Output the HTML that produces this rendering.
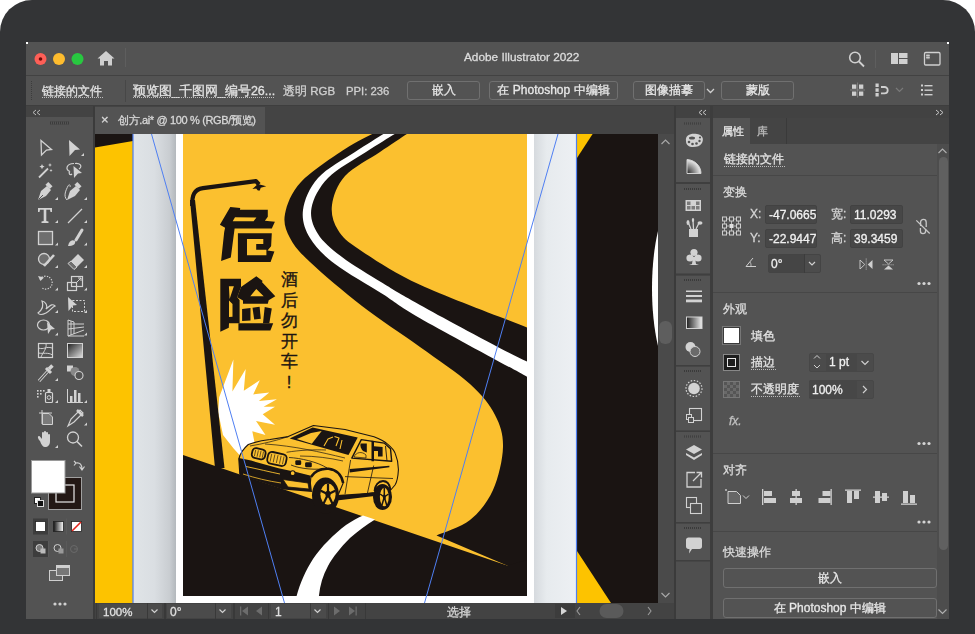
<!DOCTYPE html>
<html><head><meta charset="utf-8">
<style>
*{box-sizing:border-box;margin:0;padding:0}
html,body{width:975px;height:634px;overflow:hidden;background:#fff;font-family:"Liberation Sans",sans-serif;}
.t,.btn{will-change:transform;-webkit-text-stroke-width:0.3px}
.a{position:absolute}
.t{position:absolute;color:#e2e2e2;font-size:12px;white-space:nowrap;line-height:14px}
.btn{position:absolute;border:1px solid #707070;border-radius:3px;color:#e8e8e8;font-size:12px;text-align:center}
.dot{position:absolute;height:1px;background-image:linear-gradient(to right,#bdbdbd 50%,transparent 50%);background-size:2px 1px}
svg{position:absolute;overflow:visible}
</style></head><body>
<div class="a" style="left:0;top:0;width:975px;height:700px;background:#333436;border-radius:32px"></div>
<div class="a" style="left:26px;top:42px;width:923px;height:577px;background:#535353"></div>
<div class="a" style="left:26px;top:42px;width:2px;height:2px;background:#fff"></div>
<div class="a" style="left:947px;top:42px;width:2px;height:2px;background:#fff"></div>
<!-- TITLE BAR -->
<div class="a" style="left:26px;top:75px;width:923px;height:1px;background:#424242"></div>
<svg style="left:0;top:0" width="975" height="634" viewBox="0 0 975 634">
  <circle cx="40.5" cy="59" r="6" fill="#fe5f57"/>
  <circle cx="40.5" cy="59" r="1.8" fill="#6e0a07"/>
  <circle cx="59" cy="59" r="6" fill="#febc2e"/>
  <circle cx="77.5" cy="59" r="6" fill="#28c840"/>
  <path d="M97.5 58.5 L106 51 L114.5 58.5 L112 58.5 L112 65.5 L108 65.5 L108 61 L104 61 L104 65.5 L100 65.5 L100 58.5 Z" fill="#cfcfcf"/>
  <rect x="125" y="48" width="1" height="19" fill="#5e5e5e"/>
  <!-- search -->
  <circle cx="855" cy="57.5" r="5.3" fill="none" stroke="#d0d0d0" stroke-width="1.6"/>
  <path d="M859 61.5 L864 66.5" stroke="#d0d0d0" stroke-width="1.8"/>
  <rect x="875" y="50" width="1" height="18" fill="#5e5e5e"/>
  <!-- workspace -->
  <rect x="891" y="53" width="7" height="11" fill="#d0d0d0"/>
  <rect x="899" y="53" width="8.5" height="5" fill="#d0d0d0"/>
  <rect x="899" y="59" width="8.5" height="5" fill="#d0d0d0"/>
  <rect x="924.5" y="52.5" width="15.5" height="12.5" rx="1.2" fill="none" stroke="#d0d0d0" stroke-width="1.3"/>
  <rect x="926.2" y="54.2" width="3.5" height="5" fill="#9a9a9a"/>
  <rect x="926.2" y="55.2" width="3.5" height="0.8" fill="#d8d8d8"/><rect x="926.2" y="57.2" width="3.5" height="0.8" fill="#d8d8d8"/>
</svg>
<div class="t" style="left:464px;top:50px;font-size:11.8px;color:#dcdcdc">Adobe Illustrator 2022</div>
<!-- CONTROL BAR -->
<div class="a" style="left:26px;top:105px;width:923px;height:1px;background:#3e3e3e"></div>
<div class="dot" style="left:31px;top:81px;width:1px;height:19px;background-image:linear-gradient(to bottom,#3c3c3c 50%,transparent 50%);background-size:1px 2px"></div>
<div class="t" style="left:42px;top:84px;font-size:12px">链接的文件</div>
<div class="dot" style="left:42px;top:97px;width:61px"></div>
<div class="a" style="left:125px;top:80px;width:1px;height:22px;background:#474747"></div>
<div class="t" style="left:133px;top:84px;font-size:12.5px">预览图_千图网_编号26...</div>
<div class="dot" style="left:133px;top:97px;width:142px"></div>
<div class="t" style="left:283px;top:84px;font-size:11.5px;color:#d0d0d0">透明 RGB</div>
<div class="t" style="left:346px;top:84px;font-size:11.3px;color:#d0d0d0">PPI: 236</div>
<div class="btn" style="left:407px;top:81px;width:73px;height:19px;line-height:17px">嵌入</div>
<div class="btn" style="left:489px;top:81px;width:129px;height:19px;line-height:17px">在 Photoshop 中编辑</div>
<div class="btn" style="left:633px;top:81px;width:72px;height:19px;line-height:17px">图像描摹</div>
<svg style="left:0;top:0" width="975" height="634" viewBox="0 0 975 634">
  <path d="M707 89 L710.5 92.5 L714 89" fill="none" stroke="#d0d0d0" stroke-width="1.3"/>
  <!-- align icon -->
  <g fill="#cfcfcf">
    <rect x="852" y="84.5" width="4.3" height="4.3"/><rect x="859" y="84.5" width="4.3" height="4.3"/>
    <rect x="852" y="91.5" width="4.3" height="4.3"/><rect x="859" y="91.5" width="4.3" height="4.3"/>
  </g>
  <path d="M850 90 L865 90 M857.6 82.5 L857.6 97.5" stroke="#8a8a8a" stroke-width="0.8"/>
  <g fill="#cfcfcf">
    <rect x="875.5" y="83.5" width="3.2" height="3.5"/><rect x="875.5" y="88.3" width="3.2" height="3.5"/><rect x="875.5" y="93" width="3.2" height="3.5"/>
    <path d="M881 87 L884.5 87 A3.2 3.2 0 0 1 884.5 93.4 L881 93.4" fill="none" stroke="#cfcfcf" stroke-width="1.8"/>
  </g>
  <path d="M896 88 L899.5 91.5 L903 88" fill="none" stroke="#7a7a7a" stroke-width="1.2"/>
  <g fill="#cfcfcf">
    <rect x="921" y="84.5" width="2" height="2"/><rect x="921" y="89" width="2" height="2"/><rect x="921" y="93.5" width="2" height="2"/>
    <rect x="924.5" y="85" width="8" height="1.4"/><rect x="924.5" y="89.5" width="8" height="1.4"/><rect x="924.5" y="94" width="8" height="1.4"/>
  </g>
</svg>
<div class="btn" style="left:721px;top:81px;width:73px;height:19px;line-height:17px">蒙版</div>
<!-- LEFT TOOLBAR -->
<div class="a" style="left:26px;top:106px;width:67px;height:11px;background:#434343"></div>
<div class="a" style="left:93px;top:106px;width:2px;height:513px;background:#3b3b3b"></div>
<svg style="left:0;top:0" width="975" height="634" viewBox="0 0 975 634">
  <path d="M36 110 L33 112.5 L36 115 M40 110 L37 112.5 L40 115" fill="none" stroke="#bdbdbd" stroke-width="1"/>
  <g fill="#3c3c3c"><rect x="50" y="121.5" width="19" height="3"/></g>
  <g fill="#535353"><rect x="51" y="121.5" width="1" height="3"/><rect x="53" y="121.5" width="1" height="3"/><rect x="55" y="121.5" width="1" height="3"/><rect x="57" y="121.5" width="1" height="3"/><rect x="59" y="121.5" width="1" height="3"/><rect x="61" y="121.5" width="1" height="3"/><rect x="63" y="121.5" width="1" height="3"/><rect x="65" y="121.5" width="1" height="3"/><rect x="67" y="121.5" width="1" height="3"/></g>
  <g fill="#d2d2d2" stroke="none">
    <!-- row1 y=148 -->
    <path d="M41 140.5 L51.5 149.5 L46.5 150 L41.5 155 Z" fill="none" stroke="#d2d2d2" stroke-width="1.3"/>
    <path d="M69 140 L80 149.5 L75 150 L69.5 156 Z"/>
    <path d="M81 156 L84 156 L84 153 Z"/>
    <!-- row2 y=170.5 -->
    <path d="M39 177.5 L48 168.5" stroke="#d2d2d2" stroke-width="1.8"/>
    <path d="M42 164 l0.8 1.8 1.8 0.8 -1.8 0.8 -0.8 1.8 -0.8 -1.8 -1.8 -0.8 1.8 -0.8z M50 163 l0.6 1.4 1.4 0.6 -1.4 0.6 -0.6 1.4 -0.6 -1.4 -1.4 -0.6 1.4 -0.6z M51 169 l0.5 1 1 0.5 -1 0.5 -0.5 1 -0.5 -1 -1 -0.5 1 -0.5z"/>
    <path d="M73.5 166 L82 173 L78 173.5 L74 178 Z"/>
    <path d="M74 163.5 C 66 163.5 65 170 70 171.5 M70 171.5 C 68 173 70 176 72 174" fill="none" stroke="#d2d2d2" stroke-width="1.2"/>
    <path d="M75 163.5 C 80 163 83 166 79 169" fill="none" stroke="#d2d2d2" stroke-width="1.2"/>
    <!-- row3 y=193 -->
    <path d="M38 200 L41 191 L47 186 L51 190 L46 196 Z"/>
    <rect x="46" y="183.5" width="6" height="4" transform="rotate(45 49 185.5)"/>
    <path d="M38.5 199.5 L43 195" stroke="#535353" stroke-width="1"/>
    <path d="M55 200 L58 200 L58 197 Z"/>
    <path d="M67 200 L70 191 L76 186 L80 190 L75 196 Z"/>
    <rect x="75" y="183.5" width="6" height="4" transform="rotate(45 78 185.5)"/>
    <path d="M67 200 C 63 196 66 190 68 186 C 69 184 71 185 70 187" fill="none" stroke="#d2d2d2" stroke-width="1"/>
    <path d="M84 200 L87 200 L87 197 Z"/>
    <!-- row4 y=215.5 -->
    <path d="M38 208 L52 208 L52 212 L50.5 212 L50 209.8 L46.3 209.8 L46.3 221 L48.5 221.5 L48.5 223 L41.5 223 L41.5 221.5 L43.7 221 L43.7 209.8 L40 209.8 L39.5 212 L38 212 Z"/>
    <path d="M55 223 L58 223 L58 220 Z"/>
    <path d="M68 223 L82 209" stroke="#d2d2d2" stroke-width="1.3"/>
    <path d="M84 223 L87 223 L87 220 Z"/>
    <!-- row5 y=238 -->
    <rect x="38.5" y="231.5" width="14" height="13" fill="#6e6e6e" stroke="#d2d2d2" stroke-width="1.3"/>
    <path d="M55 245.5 L58 245.5 L58 242.5 Z"/>
    <path d="M82 230 L76 240" stroke="#d2d2d2" stroke-width="3" stroke-linecap="round"/>
    <path d="M68 246 C 69 241 72 239 75 241 C 76 244 73 246 68 246 Z"/>
    <path d="M84 245.5 L87 245.5 L87 242.5 Z"/>
    <!-- row6 y=260.5 -->
    <circle cx="44" cy="259" r="5.5" fill="#6e6e6e" stroke="#d2d2d2" stroke-width="1.3"/>
    <path d="M44 266 L54 255" stroke="#d2d2d2" stroke-width="2.6"/>
    <path d="M55 268 L58 268 L58 265 Z"/>
    <path d="M71 261 L78 254 L84 260 L77 267 Z" fill="#d2d2d2"/>
    <path d="M68 263.5 L71 261 L77 267 L74 269.5 Z" fill="#6e6e6e" stroke="#d2d2d2" stroke-width="1"/>
    <path d="M84 268 L87 268 L87 265 Z"/>
    <!-- row7 y=283 -->
    <path d="M40 279.5 A 6.5 6.5 0 1 1 42 288" fill="none" stroke="#d2d2d2" stroke-width="1.2" stroke-dasharray="1.3 1.3"/>
    <path d="M38 276 L40.5 281 L44 277.5 Z"/>
    <path d="M55 290.5 L58 290.5 L58 287.5 Z"/>
    <rect x="67.5" y="282.5" width="9" height="8" fill="none" stroke="#d2d2d2" stroke-width="1.2"/>
    <rect x="71.5" y="276.5" width="11" height="10" fill="none" stroke="#d2d2d2" stroke-width="1.2"/>
    <path d="M76 283 L81 278 M78 278 L81 278 L81 281" fill="none" stroke="#d2d2d2" stroke-width="1"/>
    <path d="M84 290.5 L87 290.5 L87 287.5 Z"/>
    <!-- row8 y=305.5 -->
    <path d="M38 313 C 42 310 44 306 42 301 C 46 302 48 306 46 309 C 50 306 52 303 55 306 C 52 307 50 311 46 313 C 44 314 40 316 38 313 Z" fill="none" stroke="#d2d2d2" stroke-width="1.2"/>
    <path d="M55 313 L58 313 L58 310 Z"/>
    <path d="M68 297 L77 305 L73 305.5 L68.5 311 Z"/>
    <rect x="72.5" y="300.5" width="12" height="11" fill="none" stroke="#d2d2d2" stroke-width="1" stroke-dasharray="2 1.5"/>
    <path d="M84 313 L87 313 L87 310 Z"/>
    <!-- row9 y=328 -->
    <ellipse cx="43.5" cy="325" rx="6" ry="5" fill="none" stroke="#d2d2d2" stroke-width="1.2"/>
    <path d="M47 322 L55 329 L51 329.5 L48 334 Z"/>
    <path d="M55 335.5 L58 335.5 L58 332.5 Z"/>
    <path d="M68 320 L68 336 L84 336 M68 320 L74 322 L74 334 M68 336 L84 330 M68 329 L84 327 M68 324 L84 324 M71 321 L71 335" fill="none" stroke="#d2d2d2" stroke-width="1"/>
    <path d="M84 335.5 L87 335.5 L87 332.5 Z"/>
    <!-- row10 y=350.5 -->
    <rect x="38.5" y="343.5" width="14" height="14" fill="none" stroke="#d2d2d2" stroke-width="1.2"/>
    <path d="M38.5 348 C 44 350 46 346 52 348 M41 357 C 43 352 47 349 46 343.5 M38.5 353 C 43 354 48 352 52.5 355" fill="none" stroke="#d2d2d2" stroke-width="1"/>
    <defs><linearGradient id="tg" x1="0" x2="1" y1="0" y2="1"><stop offset="0" stop-color="#202020"/><stop offset="1" stop-color="#e0e0e0"/></linearGradient></defs>
    <rect x="67.5" y="343.5" width="15" height="14" fill="url(#tg)" stroke="#d2d2d2" stroke-width="1"/>
    <!-- row11 y=373 -->
    <path d="M39 381 L48 371" stroke="#d2d2d2" stroke-width="3.2"/>
    <path d="M39 381 L48 371" stroke="#535353" stroke-width="1.2"/>
    <path d="M46 368 L51 373" stroke="#d2d2d2" stroke-width="3"/>
    <rect x="49" y="364.5" width="3.5" height="5" transform="rotate(45 50.5 367)"/>
    <path d="M55 381 L58 381 L58 378 Z"/>
    <rect x="67" y="365.5" width="6" height="6"/>
    <circle cx="75" cy="371.5" r="4.5" fill="#888"/>
    <circle cx="79" cy="375.5" r="4" fill="#535353" stroke="#d2d2d2" stroke-width="1.1"/>
    <!-- row12 y=395.5 -->
    <g><rect x="37" y="390" width="1.6" height="1.6"/><rect x="40" y="390" width="1.6" height="1.6"/><rect x="43" y="390" width="1.6" height="1.6"/><rect x="37" y="393" width="1.6" height="1.6"/><rect x="40" y="393" width="1.6" height="1.6"/><rect x="37" y="396" width="1.6" height="1.6"/></g>
    <rect x="45.5" y="392.5" width="7" height="10" rx="1" fill="none" stroke="#d2d2d2" stroke-width="1.2"/>
    <circle cx="49" cy="397.5" r="1.8" fill="none" stroke="#d2d2d2" stroke-width="1"/>
    <rect x="47.5" y="389" width="3" height="3"/>
    <path d="M55 403 L58 403 L58 400 Z"/>
    <path d="M67.5 389 L67.5 402.5 L83 402.5" fill="none" stroke="#d2d2d2" stroke-width="1"/>
    <rect x="70" y="396" width="2.5" height="6"/><rect x="74" y="390" width="2.5" height="12"/><rect x="78" y="393" width="2.5" height="9"/>
    <path d="M84 403 L87 403 L87 400 Z"/>
    <!-- row13 y=418 -->
    <path d="M39 413 L52 413 M42 410 L42 424" stroke="#d2d2d2" stroke-width="1"/>
    <path d="M42.5 413.5 L49 413.5 L52.5 417 L52.5 424.5 L42.5 424.5 Z" fill="#7a7a7a" stroke="#d2d2d2" stroke-width="1"/>
    <path d="M68 426 L71 419 L80 410 L83 413 L74 422 Z" fill="none" stroke="#d2d2d2" stroke-width="1.2"/>
    <path d="M77 410 L83 416" stroke="#d2d2d2" stroke-width="2.5"/>
    <path d="M84 425.5 L87 425.5 L87 422.5 Z"/>
    <!-- row14 y=440.5 -->
    <path d="M40 441 C 38 439 37 436 39 436 C 40 436 41 438 42 439 L42 433 C 42 431.5 44 431.5 44 433 L44 438 L44 432 C 44 430.5 46 430.5 46 432 L46 438 L46 433 C 46 431.5 48 431.5 48 433 L48 439 L48 435 C 48 433.5 50 433.5 50 435 L50 441 C 50 445 48 447 45 447 C 43 447 41.5 445 40 441 Z"/>
    <path d="M55 448 L58 448 L58 445 Z"/>
    <circle cx="73" cy="437.5" r="5.5" fill="none" stroke="#d2d2d2" stroke-width="1.3"/>
    <path d="M77 441.5 L82 446.5" stroke="#d2d2d2" stroke-width="1.6"/>
  </g>
  <!-- fill/stroke -->
  <rect x="48.5" y="477.5" width="33" height="32" fill="#231815" stroke="#a0a0a0" stroke-width="1"/>
  <rect x="56" y="485" width="18" height="17" fill="none" stroke="#e8e8e8" stroke-width="1.2"/>
  <rect x="31.5" y="460.5" width="33.5" height="32.5" fill="#fff" stroke="#9a9a9a" stroke-width="1"/>
  <path d="M76 463 C 80 462 82 465 82 469 M79.5 466.5 L82 470 L84.5 466.5 M74 465.5 L76 463 L74 461" fill="none" stroke="#cfcfcf" stroke-width="1.2"/>
  <rect x="34.5" y="497.5" width="6" height="6" fill="#fff" stroke="#222" stroke-width="1"/>
  <rect x="37.5" y="500.5" width="6" height="6" fill="#111" stroke="#ddd" stroke-width="1"/>
  <!-- color mode buttons -->
  <rect x="33" y="518.5" width="15" height="16" fill="#3d3d3d"/>
  <rect x="35.5" y="521.5" width="10" height="10" fill="#fff" stroke="#222" stroke-width="0.8"/>
  <defs><linearGradient id="tg2" x1="0" x2="1"><stop offset="0" stop-color="#111"/><stop offset="1" stop-color="#fff"/></linearGradient></defs>
  <rect x="53.5" y="521.5" width="10" height="10" fill="url(#tg2)" stroke="#222" stroke-width="0.8"/>
  <rect x="71.5" y="521.5" width="10" height="10" fill="#fff" stroke="#222" stroke-width="0.8"/>
  <path d="M72 531 L81 522" stroke="#e3261c" stroke-width="1.6"/>
  <!-- draw modes -->
  <rect x="33" y="541" width="15" height="16" fill="#3d3d3d"/>
  <g fill="none" stroke="#cfcfcf" stroke-width="1">
    <circle cx="39.5" cy="548" r="3.5" fill="#7a7a7a"/><rect x="40.5" y="548.5" width="5" height="5" fill="#bbb" stroke="none"/>
    <circle cx="57.5" cy="548" r="3.5"/><rect x="58.5" y="548.5" width="5" height="5" fill="#999" stroke="none"/>
    <circle cx="74" cy="549" r="3.5" stroke="#6a6a6a"/><path d="M74 549 L77 549" stroke="#6a6a6a"/>
  </g>
  <g fill="#5a5a5a"><rect x="48" y="518.5" width="1" height="16"/><rect x="66" y="518.5" width="1" height="16"/><rect x="48" y="541" width="1" height="16"/><rect x="66" y="541" width="1" height="16"/></g>
  <!-- screen mode -->
  <rect x="49.5" y="570.5" width="13" height="10" fill="#666" stroke="#cfcfcf" stroke-width="1"/>
  <rect x="56.5" y="565.5" width="13" height="10" fill="#777" stroke="#cfcfcf" stroke-width="1"/>
  <rect x="56.5" y="565.5" width="13" height="2.5" fill="#cfcfcf"/>
  <circle cx="55" cy="604" r="1.6" fill="#d0d0d0"/><circle cx="60" cy="604" r="1.6" fill="#d0d0d0"/><circle cx="65" cy="604" r="1.6" fill="#d0d0d0"/>
</svg>
<!-- TAB ROW -->
<div class="a" style="left:95px;top:106px;width:580px;height:28px;background:#444444"></div>
<div class="a" style="left:95px;top:107px;width:170px;height:27px;background:#535353"></div>
<div class="t" style="left:101px;top:113px;font-size:13px;color:#d8d8d8">×</div>
<div class="t" style="left:118px;top:113px;font-size:11px;letter-spacing:-0.35px;color:#d8d8d8">创方.ai* @ 100 % (RGB/预览)</div>
<!-- CANVAS -->
<svg style="left:95px;top:134px" width="563" height="469" viewBox="95 134 563 469">
  <defs>
    <linearGradient id="gl" x1="0" x2="1"><stop offset="0" stop-color="#e0e4e7"/><stop offset="0.5" stop-color="#dadee2"/><stop offset="0.85" stop-color="#c9cdd1"/><stop offset="1" stop-color="#b3b8bc"/></linearGradient>
    <linearGradient id="gr" x1="0" x2="1"><stop offset="0" stop-color="#d6dade"/><stop offset="0.3" stop-color="#e7ebee"/><stop offset="1" stop-color="#edf0f3"/></linearGradient>
    <clipPath id="pc"><rect x="183" y="134" width="344" height="462"/></clipPath>
  </defs>
  <rect x="95" y="134" width="38" height="469" fill="#fdc300"/>
  <path d="M95 134 L133 134 L133 141 L95 147.5 Z" fill="#1a1412"/>
  <rect x="133" y="134" width="43" height="469" fill="url(#gl)"/>
  <rect x="176" y="134" width="358" height="469" fill="#ffffff"/>
  <rect x="534" y="134" width="42.5" height="469" fill="url(#gr)"/>
  <rect x="577" y="134" width="81" height="469" fill="#1a1412"/>
  <path d="M577 134 L592.6 134 L577 158 Z" fill="#fdc300"/>
  <path d="M577 551 L577 603 L611 603 Z" fill="#fdc300"/>
  <path d="M658 231 C 650 265 650 312 658 346 Z" fill="#fff"/>
  <g clip-path="url(#pc)">
    <rect x="183" y="134" width="344" height="462" fill="#fbc02f"/>
    <path d="M372.2 134.0 C367.7 136.5 356.9 141.0 345.0 149.0 C333.1 157.0 311.0 171.2 301.0 182.0 C291.0 192.8 286.8 204.7 285.0 214.0 C283.2 223.3 285.8 230.0 290.0 238.0 C294.2 246.0 298.0 250.7 310.0 262.0 C322.0 273.3 343.7 291.8 362.0 306.0 C380.3 320.2 402.0 334.0 420.0 347.0 C438.0 360.0 457.5 372.7 470.0 384.0 C482.5 395.3 489.5 404.5 495.0 415.0 C500.5 425.5 503.3 434.5 503.0 447.0 C502.7 459.5 498.5 477.8 493.0 490.0 C487.5 502.2 479.4 512.4 470.0 520.0 C460.6 527.6 442.1 532.8 436.5 535.4 L507 565.4 L527 572 L527 134 Z" fill="#1a1412"/>
    <path d="M406.9 134.0 C402.4 137.0 390.3 145.0 380.0 152.0 C369.7 159.0 353.0 167.2 345.0 176.0 C337.0 184.8 333.2 196.0 332.0 205.0 C330.8 214.0 333.3 222.5 338.0 230.0 C342.7 237.5 346.3 240.9 360.0 250.0 C373.7 259.1 392.2 271.9 420.0 284.8 C447.8 297.7 509.2 320.3 527.0 327.4 L527 134 Z" fill="#fbc02f"/>
    <path d="M383.4 134.0 C378.7 137.0 365.9 144.7 355.0 152.0 C344.1 159.3 326.7 168.3 318.0 178.0 C309.3 187.7 304.3 200.0 303.0 210.0 C301.7 220.0 304.7 229.0 310.0 238.0 C315.3 247.0 322.9 254.7 335.0 264.0 C347.1 273.3 368.4 285.0 382.6 294.0 C396.8 303.0 395.9 304.4 420.0 318.2 C444.1 332.0 509.2 366.9 527.0 376.7 L530 378 L530 363 C509.2 353.6 444.1 318.3 420.0 304.9 C395.9 291.5 395.6 291.0 382.6 283.0 C369.6 275.0 352.8 265.2 342.0 257.0 C331.2 248.8 323.1 242.2 318.0 234.0 C312.9 225.8 309.8 217.3 311.5 208.0 C313.2 198.7 318.9 187.3 328.0 178.0 C337.1 168.7 354.9 159.3 366.0 152.0 C377.1 144.7 389.9 137.0 394.7 134.0 Z" fill="#fff"/>
    <path d="M183 455 L507 565.5 L527 560 L527 596 L183 596 Z" fill="#1a1412"/>
    <path d="M296.6 596 C 300 583 306 570 313 559 C 321 547 334 534 346 525 C 352 521 357 518 363 515.5 L 375 519.5 C 366 525 358 531 350 538 C 340 548 333 557 328 566 C 323 575 320 585 318.9 596 Z" fill="#fff"/>
    <path d="M219.2 397.3 L233.4 359.5 L232.4 391.6 L245.7 368.9 L243.8 390.7 L259.8 380.3 L253.2 394.4 L269.3 392.6 L258.9 401 L276.9 399.2 L263.6 406.7 L275 406.7 L262.7 414.3 L275 424.7 L256 421 L265.5 435.1 L252.3 431.3 L255 445 L243.8 459.7 L233.4 448.3 L223 435.1 L218.2 412.4 Z" fill="#fff"/>
    <path d="M192.2 206 C 192 195 194 189.5 203 188.2 L 256 181.2 L 259 184.5" fill="none" stroke="#1a1412" stroke-width="4.2" stroke-linejoin="round"/>
    <path d="M190 200 L215 468 L224.5 468 L195 200 Z" fill="#1a1412"/>
    <path d="M252.4 189.1 L257.9 184 L266.2 186.3 L260.7 187.7 L259.8 190.5 L257.9 190.5 L256.1 188.6 Z" fill="#1a1412"/>
  </g>
</svg>
<svg style="left:95px;top:134px" width="563" height="469" viewBox="95 134 563 469">
  <g fill="#1a1412" fill-rule="evenodd">
    <path d="M230.3 207.1 L240.2 208 L240 209.7 L267.8 209.7 L267.8 216.8 L264.9 220.8 L274.9 221.7 L271.8 228.6 L234.6 228.6 L230.8 257.6 L221.1 260.9 L224.2 232 L225.1 227.7 L219.9 224.8 Z M235 217.3 L256.4 217.5 L253.6 221.3 L232.7 221.3 Z"/>
    <path d="M237.9 233.2 L271.8 233.2 L271.1 246.2 L267.5 250.5 L274.4 251.4 L270.6 262 L237.9 262 Z M247 239.1 L263.3 239.1 L263.3 244.1 L256.2 244.1 L256.2 249.7 L266.4 249.7 L266.4 255.2 L247 255.2 Z"/>
    <path d="M220.3 278.8 L241 278.8 L241 287 L237.2 297.3 L239.6 300 L239.6 323.3 L229 323.3 L228.8 327.8 L220.3 331.8 Z M228.9 286.2 L233.9 286.2 L229.6 299 Z M229 300.5 L232.5 304 L232.5 316.7 L229 317 Z"/>
    <path d="M256.3 276.3 L262.7 280.9 L261.9 282.1 L275.3 296.2 L268.7 300.3 L267.8 303.7 L243 303.7 L243 300.5 L237.2 297.3 L241 287 Z M256.3 288.9 L263.7 296.2 L250.3 296.2 Z"/>
    <path d="M242.1 309 L250.5 307.9 L250.5 320.4 L242.1 321 Z"/>
    <path d="M252.5 307.7 L259.6 306.8 L260.8 318.7 L254.2 319.6 Z"/>
    <path d="M264.7 307.1 L271.8 308.5 L269.3 323.3 L263 323.3 Z"/>
    <path d="M238.4 323.3 L273.2 323.3 L270.4 330.4 L238.4 330.6 Z"/>
  </g>
</svg>
<div class="a" style="left:279px;top:269px;width:20px;font-weight:500;font-size:16.5px;line-height:20.5px;color:#1a1412;-webkit-text-stroke:0.35px #1a1412;font-family:'Liberation Sans',sans-serif;text-align:center">酒<br>后<br>勿<br>开<br>车<br>!</div>
<svg style="left:95px;top:134px" width="563" height="469" viewBox="95 134 563 469">
  <defs><clipPath id="pc2"><rect x="183" y="134" width="344" height="462"/></clipPath></defs>
  <g clip-path="url(#pc2)" stroke-linejoin="round">
    <!-- tires -->
    <ellipse cx="325.5" cy="495.5" rx="13.5" ry="18" fill="#1a1412"/>
    <ellipse cx="382.5" cy="497" rx="9.5" ry="13" fill="#1a1412"/>
    <!-- body -->
    <path d="M239.8 474 L238.8 459 C 240 454 243 449 248.3 444.5 C 255 442 262 440.5 270 439.5 L 288.2 436.6 L 313.4 425.5 L 345 429.5 L 374 436.8 C 380 439 384 441 387.3 443.9 C 391 447 394 450 395.2 453.4 C 397.5 459 398.5 465 398.4 470 C 398 477 397 482 395 485 L 390.3 490.5 C 390 485 387 481.5 383 481.5 C 378 481.5 375 486 374.5 492.5 L 337 497.5 L 343.2 483 C 341 473 336 470 328.5 469.2 C 320 469 314 472 310.9 476.6 L 310 488 L 283.3 486.1 Z" fill="#fbc02f" stroke="#1a1412" stroke-width="1.1"/>
    <!-- windshield -->
    <path d="M289.7 438.5 L 312.6 427.5 L 357.7 437.6 L 348.5 455 Z" fill="#1a1412"/>
    <path d="M296.8 438.9 L 311 433 L 321.7 431 L 311.8 443.7 Z" fill="#fbc02f"/>
    <path d="M324 446 L 328 439 L 333 437 M 334.5 436.5 L 339 438 L 336 446 M 342 440 L 340 449" stroke="#fbc02f" stroke-width="1.1" fill="none"/>
    <!-- side windows -->
    <path d="M351.8 458.1 L 361.3 439.6 L 384.2 443.1 L 390.5 448.7 L 391.7 461.3 Z" fill="#fbc02f" stroke="#1a1412" stroke-width="1.4"/>
    <path d="M371.5 440.8 L 374 441 L 374 461.3 L 371.5 461.3 Z" fill="#1a1412"/>
    <path d="M360.5 443.5 L 366.8 443.5 L 366.8 452.6 L 363 451 C 361 449 360 446 360.5 443.5 Z" fill="#1a1412"/>
    <path d="M374 446.3 L 382.6 447 L 382.6 456.5 L 378 456.5 L 378 451 L 374 451 Z" fill="#1a1412"/>
    <path d="M385.5 446 L 387 461" stroke="#1a1412" stroke-width="0.9"/>
    <path d="M354 457 C 356 452 362 451 366 455 L 366 458 Z" fill="none" stroke="#1a1412" stroke-width="0.7"/>
    <!-- side crease / lines -->
    <path d="M349.7 469 L 389.4 465.8 L 389.4 467.2 L 349.7 472.5 Z" fill="#1a1412"/>
    <path d="M350.6 460 L 345 494.2 M 373.7 465.5 L 367.2 494.2 M 345 476.6 L 393 478.5" stroke="#1a1412" stroke-width="0.8" fill="none"/>
    <path d="M336.8 495 L 374.6 492.5 L 374.6 496 L 336.8 500.5 Z" fill="#1a1412"/>
    <!-- hood lines -->
    <path d="M288.2 436.6 C 275 441 262 444 250 446 M 286.6 452.3 C 300 450 315 449.5 326 450 M 265 444 C 295 446 320 452 345 458 M 300 456 C 315 456 330 458 343 461" stroke="#1a1412" stroke-width="0.7" fill="none"/>
    <!-- grilles -->
    <g transform="rotate(12 258.7 453.75)"><rect x="252" y="448.8" width="13.4" height="9.9" rx="3.5" fill="#fbc02f" stroke="#1a1412" stroke-width="1.8"/>
      <path d="M255 450.5 L255 457 M257.7 450.5 L257.7 457 M260.4 450.5 L260.4 457 M263 450.5 L263 457" stroke="#1a1412" stroke-width="0.6"/></g>
    <g transform="rotate(12 276.95 458.95)"><rect x="267.5" y="453" width="18.9" height="11.9" rx="4" fill="#fbc02f" stroke="#1a1412" stroke-width="1.8"/>
      <path d="M270.8 455 L270.8 463 M274 455 L274 463 M277.2 455 L277.2 463 M280.4 455 L280.4 463 M283.4 455 L283.4 463" stroke="#1a1412" stroke-width="0.6"/></g>
    <!-- headlights -->
    <path d="M289 457.5 C 300 458 318 462 327 468 C 318 470.5 300 469 291 465" fill="none" stroke="#1a1412" stroke-width="0.8"/>
    <rect x="295.3" y="460.2" width="5.9" height="4.8" rx="1.3" fill="#1a1412"/>
    <rect x="305.1" y="462.2" width="6.7" height="5.1" rx="1.3" fill="#1a1412"/>
    <!-- lower front -->
    <path d="M238.8 458 L 251.1 460.6 L 278.6 468.2 L 296 472 L 310 475.5 L 312 492 L 283 489.5 L 239.8 475 Z" fill="#1a1412"/>
    <path d="M283 479.5 L 308 483 L 309 489 L 288 487 Z" fill="#fbc02f" stroke="#1a1412" stroke-width="0.8"/>
    <path d="M246 466.5 C 258 469 270 472 280 474" stroke="#fbc02f" stroke-width="0.9" fill="none"/>
    <path d="M243 474 C 255 478 268 481 281 483" stroke="#fbc02f" stroke-width="0.8" fill="none"/>
    <circle cx="292.7" cy="473.2" r="2.4" fill="#fbc02f" stroke="#1a1412" stroke-width="1.1"/>
    
    <!-- arches -->
    <path d="M310.9 477 C 315 470.5 322 468.5 328.5 468.8 C 336 469.5 341 473 343.2 483" fill="none" stroke="#1a1412" stroke-width="2.6"/>
    <path d="M374.5 491 C 375 485 378.5 481 383 481 C 387 481 389.5 484 390.3 489" fill="none" stroke="#1a1412" stroke-width="1.8"/>
    <!-- rims -->
    <ellipse cx="328" cy="494.2" rx="7.6" ry="10.6" fill="#fbc02f"/>
    <path d="M328 494.2 L328 483.6 M328 494.2 L335.2 490.8 M328 494.2 L332.5 503.8 M328 494.2 L323.5 503.8 M328 494.2 L320.8 490.8" stroke="#1a1412" stroke-width="2.2"/>
    <ellipse cx="328" cy="494.2" rx="2.6" ry="3.4" fill="#1a1412"/>
    <ellipse cx="384.3" cy="497" rx="4.4" ry="9.3" fill="#fbc02f"/>
    <path d="M384.3 497 L384.3 487.7 M384.3 497 L388.5 494 M384.3 497 L386.8 505.5 M384.3 497 L381.8 505.5 M384.3 497 L380.1 494" stroke="#1a1412" stroke-width="1.5"/>
    <ellipse cx="384.3" cy="497" rx="1.5" ry="2.8" fill="#1a1412"/>
  </g>
</svg>
<svg style="left:95px;top:134px" width="563" height="469" viewBox="95 134 563 469">
  <path d="M133 134 L133 603 M576.5 134 L576.5 603" stroke="#4f7ff2" stroke-width="1.2"/>
  <path d="M151.5 134 L284.5 603 M558 134 L424.5 603" stroke="#4f7ff2" stroke-width="1"/>
</svg>
<!-- V SCROLL + STATUS -->
<div class="a" style="left:658px;top:134px;width:16px;height:469px;background:#4a4a4a"></div>
<div class="a" style="left:659px;top:321px;width:13px;height:23px;background:#5e5e5e;border-radius:6px"></div>
<div class="a" style="left:674px;top:106px;width:2px;height:513px;background:#3b3b3b"></div>
<div class="a" style="left:95px;top:603px;width:579px;height:16px;background:#434343"></div>
<svg style="left:0;top:0" width="975" height="634" viewBox="0 0 975 634">
  <path d="M661.5 144 L665.5 140 L669.5 144" fill="none" stroke="#a8a8a8" stroke-width="1.2"/>
  <path d="M661.5 593 L665.5 597 L669.5 593" fill="none" stroke="#a8a8a8" stroke-width="1.2"/>
  <g fill="#4b4b4b">
    <rect x="99" y="604" width="48" height="14"/><rect x="147" y="604" width="15" height="14"/>
    <rect x="167" y="604" width="48" height="14"/><rect x="215" y="604" width="16" height="14"/>
    <rect x="271" y="604" width="39" height="14"/><rect x="310" y="604" width="16" height="14"/>
    <rect x="555" y="604" width="20" height="14" fill="#3c3c3c"/>
  </g>
  <g fill="#393939"><rect x="96" y="603" width="1" height="16"/><rect x="164" y="603" width="2" height="16"/><rect x="233" y="603" width="2" height="16"/><rect x="268" y="603" width="1" height="16"/><rect x="328" y="603" width="1" height="16"/><rect x="365" y="603" width="1" height="16"/><rect x="147" y="603" width="1" height="16"/><rect x="215" y="603" width="1" height="16"/><rect x="310" y="603" width="1" height="16"/></g>
  <g fill="none" stroke="#d0d0d0" stroke-width="1.2">
    <path d="M151.5 609.5 L154.5 612.5 L157.5 609.5"/>
    <path d="M219.5 609.5 L222.5 612.5 L225.5 609.5"/>
    <path d="M314.5 609.5 L317.5 612.5 L320.5 609.5"/>
  </g>
  <g fill="#6c6c6c">
    <rect x="240" y="606.5" width="1.3" height="9"/><path d="M248 606.5 L242 611 L248 615.5 Z"/>
    <path d="M262 606.5 L256 611 L262 615.5 Z"/>
    <path d="M334 606.5 L340 611 L334 615.5 Z"/>
    <path d="M349 606.5 L355 611 L349 615.5 Z"/><rect x="355.5" y="606.5" width="1.3" height="9"/>
  </g>
  <path d="M561 607 L567 611 L561 615 Z" fill="#d6d6d6"/>
  <path d="M580 607 L577 611 L580 615" fill="none" stroke="#9a9a9a" stroke-width="1.1"/>
  <path d="M648 607 L651 611 L648 615" fill="none" stroke="#9a9a9a" stroke-width="1.1"/>
  <rect x="599.5" y="604" width="24" height="14" rx="7" fill="#5a5a5a"/>
</svg>
<div class="t" style="left:103px;top:605px;font-size:11.5px;color:#e0e0e0">100%</div>
<div class="t" style="left:170px;top:605px;font-size:12px;color:#e0e0e0">0°</div>
<div class="t" style="left:275px;top:605px;font-size:12px;color:#e0e0e0">1</div>
<div class="t" style="left:447px;top:605px;font-size:12px;color:#d8d8d8">选择</div>
<!-- RIGHT PANELS -->
<div class="a" style="left:676px;top:106px;width:273px;height:11.5px;background:#424242"></div>
<div class="a" style="left:676px;top:117.5px;width:34px;height:501.5px;background:#4f4f4f"></div>
<div class="a" style="left:710px;top:106px;width:3px;height:513px;background:#3d3d3d"></div>
<svg style="left:0;top:0" width="975" height="634" viewBox="0 0 975 634">
  <path d="M702 110 L699 112.5 L702 115 M706 110 L703 112.5 L706 115" fill="none" stroke="#c8c8c8" stroke-width="1"/>
  <path d="M936 110 L939 112.5 L936 115 M940 110 L943 112.5 L940 115" fill="none" stroke="#c8c8c8" stroke-width="1"/>
  <!-- groups -->
  <g fill="#535353">
    <rect x="676" y="118" width="34" height="64"/>
    <rect x="676" y="184" width="34" height="90"/>
    <rect x="676" y="275.5" width="34" height="90"/>
    <rect x="676" y="366.5" width="34" height="64"/>
    <rect x="676" y="432" width="34" height="90"/>
    <rect x="676" y="523.5" width="34" height="37"/>
  </g>
  <g fill="#3f3f3f"><rect x="676" y="182" width="34" height="2"/><rect x="676" y="273.5" width="34" height="2"/><rect x="676" y="365" width="34" height="1.5"/><rect x="676" y="430.5" width="34" height="1.5"/><rect x="676" y="522" width="34" height="1.5"/><rect x="676" y="560" width="34" height="1.5"/></g>
  <g stroke="#3a3a3a" stroke-width="1" stroke-dasharray="1 1">
    <path d="M684 123 L702 123 M684 124 L702 124 M684 188.5 L702 188.5 M684 189.5 L702 189.5 M684 279.5 L702 279.5 M684 280.5 L702 280.5 M684 370.5 L702 370.5 M684 371.5 L702 371.5 M684 436 L702 436 M684 437 L702 437 M684 527.5 L702 527.5 M684 528.5 L702 528.5"/>
  </g>
  <g fill="#d2d2d2">
    <!-- palette -->
    <path d="M686 141 C 685 135 691 133 697 134 C 703 135 704 139 702 143 C 700 146 697 147 693 147 C 689 147 686 145 686 141 Z"/>
    <g fill="#535353"><circle cx="689" cy="142" r="1.3"/><circle cx="692.5" cy="144" r="1.3"/><circle cx="696.5" cy="143.5" r="1.3"/><circle cx="699.5" cy="141" r="1.2"/><circle cx="700" cy="137.5" r="1.1"/><ellipse cx="692" cy="138" rx="3" ry="1.5"/></g>
    <!-- color guide -->
    <defs><radialGradient id="cg" cx="0" cy="1" r="1"><stop offset="0" stop-color="#222"/><stop offset="1" stop-color="#eee"/></radialGradient></defs>
    <path d="M687 159.5 C 695 160 701 166 701 173.5 L 687 173.5 Z" fill="url(#cg)" stroke="#d2d2d2" stroke-width="1"/>
    <!-- swatches -->
    <rect x="685.5" y="200" width="15.5" height="11" fill="#d2d2d2"/>
    <g fill="#7a7a7a"><rect x="687" y="201.5" width="3.5" height="3.5"/><rect x="696" y="201.5" width="3.5" height="3.5"/><rect x="687" y="206" width="3.5" height="3.5"/><rect x="691.5" y="206" width="3.5" height="3.5"/><rect x="696" y="206" width="3.5" height="3.5"/></g>
    <!-- brushes -->
    <rect x="689" y="229" width="9" height="8"/>
    <path d="M691 229 L688 222 M693.5 229 L693 220 M696 229 L699 223" stroke="#d2d2d2" stroke-width="1.3"/>
    <ellipse cx="700" cy="223" rx="2.5" ry="1.8"/><ellipse cx="688" cy="222.5" rx="1.5" ry="2.5"/><ellipse cx="693" cy="220" rx="1.2" ry="2"/>
    <!-- club -->
    <circle cx="694" cy="252.5" r="3.6"/><circle cx="690" cy="258" r="3.6"/><circle cx="698" cy="258" r="3.6"/>
    <path d="M693 257 L692 264 L689 265 L699 265 L696 264 L695 257 Z"/>
    <!-- lines -->
    <rect x="686" y="290.5" width="16" height="1.5"/><rect x="686" y="295" width="16" height="2"/><rect x="686" y="299.5" width="16" height="2.8"/>
    <!-- gradient -->
    <defs><linearGradient id="g3" x1="0" x2="1"><stop offset="0" stop-color="#1e1e1e"/><stop offset="1" stop-color="#f0f0f0"/></linearGradient></defs>
    <rect x="686.5" y="317" width="15.5" height="11.5" fill="url(#g3)" stroke="#d2d2d2" stroke-width="1"/>
    <!-- transparency -->
    <circle cx="690.5" cy="347" r="5"/>
    <circle cx="695" cy="351.5" r="5" fill="#6a6a6a" stroke="#d2d2d2" stroke-width="1"/>
    <!-- appearance -->
    <circle cx="694" cy="388.5" r="5.8"/>
    <circle cx="694" cy="388.5" r="8" fill="none" stroke="#d2d2d2" stroke-width="1.2" stroke-dasharray="1.5 1.6"/>
    <!-- artboards -->
    <rect x="689.5" y="408.5" width="12" height="12" fill="none" stroke="#d2d2d2" stroke-width="1.1"/>
    <rect x="686.5" y="414.5" width="5" height="5" fill="#535353" stroke="#d2d2d2" stroke-width="1"/>
    <rect x="688.5" y="417.5" width="5" height="5" fill="#535353" stroke="#d2d2d2" stroke-width="1"/>
    <!-- layers -->
    <path d="M694 445 L702 449.5 L694 454 L686 449.5 Z"/>
    <path d="M686 453 L694 457.5 L702 453 L702 455 L694 460 L686 455 Z"/>
    <!-- export -->
    <path d="M695 472.5 L687 472.5 L687 487 L701 487 L701 479" fill="none" stroke="#d2d2d2" stroke-width="1.3"/>
    <path d="M693 481 L701.5 472.5 M696.5 472.5 L701.5 472.5 L701.5 477.5" fill="none" stroke="#d2d2d2" stroke-width="1.3"/>
    <!-- artboards 2 -->
    <rect x="686.5" y="497.5" width="10" height="10" fill="none" stroke="#d2d2d2" stroke-width="1.1"/>
    <rect x="690.5" y="503.5" width="11" height="10" fill="#535353" stroke="#d2d2d2" stroke-width="1.1"/>
    <!-- comment -->
    <path d="M686 540 C 686 538.5 687 537.5 688.5 537.5 L 699.5 537.5 C 701 537.5 702 538.5 702 540 L702 546.5 C 702 548 701 549 699.5 549 L 692 549 L 689 553.5 L 689.5 549 L 688.5 549 C 687 549 686 548 686 546.5 Z"/>
  </g>
</svg>
<!-- properties panel -->
<div class="a" style="left:713px;top:117.5px;width:236px;height:26px;background:#444444"></div>
<div class="a" style="left:713px;top:117.5px;width:37px;height:26px;background:#535353"></div>
<div class="a" style="left:786px;top:117.5px;width:1px;height:26px;background:#3a3a3a"></div>
<div class="t" style="left:722px;top:124px;font-size:11px;color:#e8e8e8">属性</div>
<div class="t" style="left:757px;top:124px;font-size:11px;color:#bdbdbd">库</div>
<div class="a" style="left:937px;top:143.5px;width:12px;height:475.5px;background:#4d4d4d"></div>
<div class="a" style="left:938.5px;top:157px;width:9px;height:393px;background:#606060;border-radius:4.5px"></div>
<div class="t" style="left:724px;top:152px;font-size:12px">链接的文件</div>
<div class="dot" style="left:724px;top:166px;width:62px"></div>
<div class="a" style="left:713px;top:175px;width:224px;height:1px;background:#474747"></div>
<div class="t" style="left:723px;top:185px;font-size:12px;color:#dadada">变换</div>
<div class="t" style="left:750px;top:207px;font-size:12px;color:#d6d6d6">X:</div>
<div class="t" style="left:750px;top:231px;font-size:12px;color:#d6d6d6">Y:</div>
<div class="t" style="left:831px;top:207px;font-size:12px;color:#d6d6d6">宽:</div>
<div class="t" style="left:831px;top:231px;font-size:12px;color:#d6d6d6">高:</div>
<div class="a" style="left:764.5px;top:204.5px;width:52px;height:19px;background:#474747;border:1px solid #424242;border-radius:2px;overflow:hidden"><span class="t" style="left:3px;top:2px;font-size:12px;color:#f0f0f0">-47.0665</span></div>
<div class="a" style="left:764.5px;top:229px;width:52px;height:19px;background:#474747;border:1px solid #424242;border-radius:2px;overflow:hidden"><span class="t" style="left:3px;top:2px;font-size:12px;color:#f0f0f0">-22.9447</span></div>
<div class="a" style="left:850px;top:204.5px;width:53px;height:19px;background:#474747;border:1px solid #424242;border-radius:2px;overflow:hidden"><span class="t" style="left:3px;top:2px;font-size:12px;color:#f0f0f0">11.0293</span></div>
<div class="a" style="left:850px;top:229px;width:53px;height:19px;background:#474747;border:1px solid #424242;border-radius:2px;overflow:hidden"><span class="t" style="left:3px;top:2px;font-size:12px;color:#f0f0f0">39.3459</span></div>
<div class="a" style="left:768px;top:254px;width:53px;height:19px;background:#4c4c4c;border:1px solid #444;border-radius:2px"></div><div class="a" style="left:769px;top:255px;width:35px;height:17px;background:#454545"></div>
<div class="a" style="left:803.5px;top:254px;width:1px;height:19px;background:#3c3c3c"></div>
<div class="t" style="left:771px;top:257px;font-size:12px;color:#f0f0f0">0°</div>
<svg style="left:0;top:0" width="975" height="634" viewBox="0 0 975 634">
  <g fill="none" stroke="#cfcfcf" stroke-width="1">
    <rect x="722.5" y="217" width="4" height="4"/><rect x="729.5" y="217" width="4" height="4"/><rect x="736.5" y="217" width="4" height="4"/>
    <rect x="722.5" y="224" width="4" height="4"/><rect x="736.5" y="224" width="4" height="4"/>
    <rect x="722.5" y="231" width="4" height="4"/><rect x="729.5" y="231" width="4" height="4"/><rect x="736.5" y="231" width="4" height="4"/>
  </g>
  <rect x="729.5" y="224" width="4" height="4" fill="#e0e0e0"/>
  <path d="M726.5 219 L729.5 219 M733.5 219 L736.5 219 M726.5 233 L729.5 233 M733.5 233 L736.5 233 M724.5 221 L724.5 224 M724.5 228 L724.5 231 M738.5 221 L738.5 224 M738.5 228 L738.5 231 M726.5 226 L729.5 226 M733.5 226 L736.5 226 M731.5 221 L731.5 224 M731.5 228 L731.5 231" stroke="#cfcfcf" stroke-width="0.8"/>
  <path d="M809 262 L812 265 L815 262" fill="none" stroke="#d0d0d0" stroke-width="1.2"/>
  <path d="M746 266.5 L756 266.5 M746 266.5 L753 258" fill="none" stroke="#cfcfcf" stroke-width="1"/>
  <path d="M751 266 A 5 5 0 0 0 750 262" fill="none" stroke="#cfcfcf" stroke-width="0.8"/>
  <!-- link -->
  <g fill="none" stroke="#c8c8c8" stroke-width="1.3">
    <path d="M920.6 226 L920.6 222.2 A 2.8 2.8 0 0 1 926.2 222.2 L926.2 227"/>
    <path d="M920.4 228 L920.4 231 A 2.6 2.6 0 0 0 925.6 231 L925.6 229"/>
    <path d="M916.3 220.4 L929.7 233.5"/>
  </g>
  <!-- flip -->
  <g fill="#cfcfcf">
    <path d="M860 260 L864.8 264.5 L860 269 Z" fill="none" stroke="#cfcfcf" stroke-width="0.9"/>
    <path d="M872.5 260 L867.7 264.5 L872.5 269 Z"/>
    <path d="M866.2 258.5 L866.2 270.5" stroke="#cfcfcf" stroke-width="0.7" stroke-dasharray="1.2 0.8"/>
    <path d="M884 260 L893 260 L888.5 264 Z" fill="none" stroke="#cfcfcf" stroke-width="0.9"/>
    <path d="M884 269.5 L893 269.5 L888.5 265.5 Z"/>
    <path d="M882.5 264.8 L894.5 264.8" stroke="#cfcfcf" stroke-width="0.7" stroke-dasharray="1.2 0.8"/>
  </g>
  <g fill="#d4d4d4">
    <circle cx="919" cy="283.5" r="1.6"/><circle cx="924" cy="283.5" r="1.6"/><circle cx="929" cy="283.5" r="1.6"/>
    <circle cx="919" cy="443.5" r="1.6"/><circle cx="924" cy="443.5" r="1.6"/><circle cx="929" cy="443.5" r="1.6"/>
    <circle cx="919" cy="522" r="1.6"/><circle cx="924" cy="522" r="1.6"/><circle cx="929" cy="522" r="1.6"/>
  </g>
  <path d="M938.5 153 L942.5 149 L946.5 153" fill="none" stroke="#b0b0b0" stroke-width="1.1"/>
  <path d="M938.5 609.5 L942.5 613.5 L946.5 609.5" fill="none" stroke="#b0b0b0" stroke-width="1.1"/>
</svg>
<div class="a" style="left:713px;top:292px;width:224px;height:1px;background:#474747"></div>
<div class="t" style="left:723px;top:302px;font-size:12px;color:#dadada">外观</div>
<div class="a" style="left:722.5px;top:327px;width:17px;height:16.5px;background:#fff;border:1px solid #3a3a3a;box-shadow:0 0 0 1px #777"></div>
<div class="t" style="left:751px;top:329px;font-size:12px">填色</div>
<div class="a" style="left:722.5px;top:353.5px;width:17px;height:17px;background:#1e1e1e;border:1px solid #888"></div>
<div class="a" style="left:726.5px;top:357.5px;width:9px;height:9px;border:1.5px solid #e8e8e8"></div>
<div class="t" style="left:751px;top:355px;font-size:12px">描边</div>
<div class="dot" style="left:751px;top:369px;width:25px"></div>
<div class="a" style="left:722.5px;top:381px;width:17px;height:16.5px;border:1px solid #777;background-image:linear-gradient(45deg,#6a6a6a 25%,transparent 25%,transparent 75%,#6a6a6a 75%),linear-gradient(45deg,#6a6a6a 25%,#555 25%,#555 75%,#6a6a6a 75%);background-size:6px 6px;background-position:0 0,3px 3px"></div>
<div class="t" style="left:751px;top:382px;font-size:12px">不透明度</div>
<div class="dot" style="left:751px;top:396px;width:49px"></div>
<div class="a" style="left:808.5px;top:352.5px;width:65px;height:19px;border:1px solid #474747;border-radius:2px;background:#4b4b4b"></div>
<div class="a" style="left:825.5px;top:352.5px;width:31px;height:19px;background:#474747"></div>
<div class="a" style="left:808.5px;top:380px;width:65px;height:19px;border:1px solid #474747;border-radius:2px;background:#4b4b4b"></div>
<div class="a" style="left:808.5px;top:380px;width:48px;height:19px;background:#474747;border-radius:2px 0 0 2px"></div>
<div class="t" style="left:829px;top:355px;font-size:12px;color:#f0f0f0">1 pt</div>
<div class="t" style="left:812px;top:383px;font-size:12px;color:#f0f0f0">100%</div>
<svg style="left:0;top:0" width="975" height="634" viewBox="0 0 975 634">
  <path d="M814 358.5 L817 355.5 L820 358.5 M814 365 L817 368 L820 365" fill="none" stroke="#cfcfcf" stroke-width="1"/>
  <path d="M861.5 361 L865 364.5 L868.5 361" fill="none" stroke="#cfcfcf" stroke-width="1.2"/>
  <path d="M863 386 L866.5 389.5 L863 393" fill="none" stroke="#cfcfcf" stroke-width="1.2"/>
</svg>
<div class="t" style="left:729px;top:414px;font-size:12px;color:#c0c0c0;font-style:italic">fx.</div>
<div class="a" style="left:713px;top:452.5px;width:224px;height:1px;background:#474747"></div>
<div class="t" style="left:723px;top:463px;font-size:12px;color:#dadada">对齐</div>
<svg style="left:0;top:0" width="975" height="634" viewBox="0 0 975 634">
  <g fill="#cfcfcf">
    <path d="M728 491.5 L736.5 491.5 L740.5 495.5 L740.5 503.5 L728 503.5 Z" fill="#666" stroke="#cfcfcf" stroke-width="1"/>
    <circle cx="726" cy="490" r="0.9"/>
    <path d="M743 495.5 L746 498.5 L749 495.5" fill="none" stroke="#cfcfcf" stroke-width="1"/>
    <rect x="762" y="489" width="1.3" height="16"/><rect x="764" y="491" width="8" height="5"/><rect x="764" y="498" width="12" height="5"/>
    <rect x="795.5" y="489" width="1.3" height="16"/><rect x="792" y="491" width="8" height="5"/><rect x="790" y="498" width="12" height="5"/>
    <rect x="830.5" y="489" width="1.3" height="16"/><rect x="822.5" y="491" width="8" height="5"/><rect x="818.5" y="498" width="12" height="5"/>
    <rect x="845" y="489.5" width="16" height="1.3"/><rect x="847" y="491" width="5" height="12"/><rect x="854" y="491" width="5" height="8"/>
    <rect x="873" y="496.5" width="16" height="1.3"/><rect x="875" y="491" width="5" height="12"/><rect x="882" y="493" width="5" height="8"/>
    <rect x="901" y="503.5" width="16" height="1.3"/><rect x="903" y="491" width="5" height="12"/><rect x="910" y="495" width="5" height="8"/>
  </g>
</svg>
<div class="a" style="left:713px;top:530.5px;width:224px;height:1px;background:#474747"></div>
<div class="t" style="left:723px;top:545px;font-size:12px;color:#dadada">快速操作</div>
<div class="btn" style="left:722.5px;top:568px;width:213.5px;height:19.5px;line-height:18px;font-size:12px">嵌入</div>
<div class="btn" style="left:722.5px;top:597.5px;width:213.5px;height:19.5px;line-height:18px;font-size:12px">在 Photoshop 中编辑</div>
</body></html>
